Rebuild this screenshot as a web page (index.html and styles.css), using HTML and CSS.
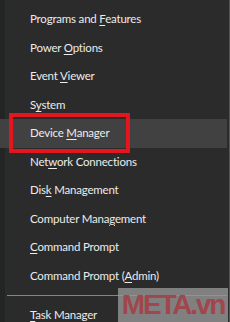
FILE: index.html
```html
<!DOCTYPE html>
<html>
<head>
<meta charset="utf-8">
<link rel="stylesheet" href="styles.css">
</head>
<body>
<div class="menu">
  <ul class="list">
    <li class="item">Programs and <u>F</u>eatures</li>
    <li class="item">Power <u>O</u>ptions</li>
    <li class="item">Event <u>V</u>iewer</li>
    <li class="item">S<u>y</u>stem</li>
    <li class="item active">Device <u>M</u>anager</li>
    <li class="item">Net<u>w</u>ork Connections</li>
    <li class="item">Dis<u>k</u> Management</li>
    <li class="item">Computer Mana<u>g</u>ement</li>
    <li class="item"><u>C</u>ommand Prompt</li>
    <li class="item">Command Prompt (<u>A</u>dmin)</li>
  </ul>
  <div class="sep"></div>
  <ul class="list">
    <li class="item"><u>T</u>ask Manager</li>
  </ul>
  <div class="redbox"></div>
  <div class="mark">META.vn</div>
</div>
</body>
</html>
```
FILE: styles.css
```css
html, body {
  margin: 0;
  padding: 0;
  background: #2b2b2b;
}
.menu {
  position: relative;
  width: 230px;
  height: 322px;
  overflow: hidden;
  background: #2b2b2b;
  box-shadow: inset 5px 0 0 #232424, inset -1px 0 0 #555;
  padding-top: 5px;
  box-sizing: border-box;
  font-family: "Lato", "Open Sans", sans-serif;
  font-size: 11.5px;
  letter-spacing: -0.2px;
  color: #ececec;
}
.list {
  list-style: none;
  margin: 0;
  padding: 0;
}
.item {
  display: block;
  height: 28.5px;
  line-height: 28.5px;
  white-space: nowrap;
  padding-left: 30px;
}
.item u {
  text-decoration-thickness: 1px;
  text-underline-offset: 2px;
}
.item.active {
  background: #414141;
  margin-right: 3px;
}
.redbox {
  position: absolute;
  left: 9px;
  top: 113px;
  width: 113px;
  height: 32px;
  border: 4px solid #e3151f;
}
.sep {
  height: 1px;
  background: #858585;
  margin: 5px 3px 5px 7px;
}
.mark {
  position: absolute;
  right: 2px;
  bottom: 0;
  width: 110px;
  height: 34px;
  background: rgba(150, 150, 150, 0.8);
  color: #a0464c;
  font-family: "Liberation Sans", sans-serif;
  font-weight: bold;
  font-size: 28px;
  line-height: 33px;
  text-align: center;
  letter-spacing: -2.2px;
  white-space: nowrap;
}
```
